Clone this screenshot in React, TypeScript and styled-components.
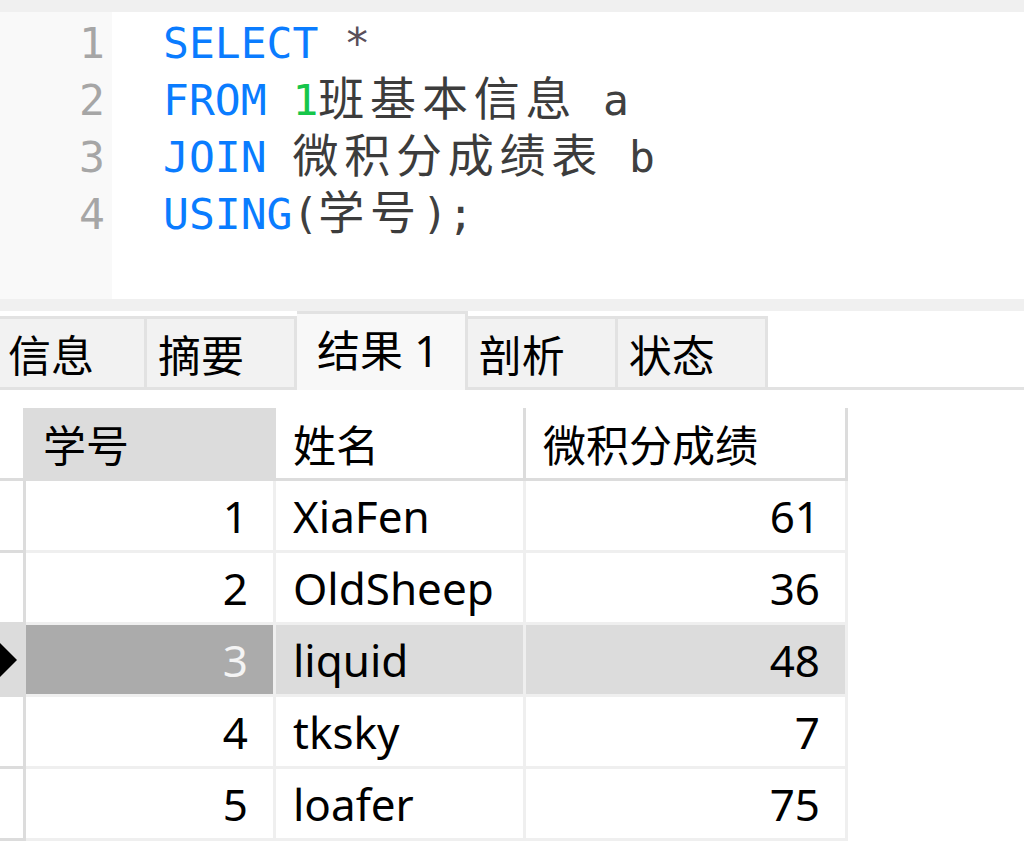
import React from "react";
import styled, { createGlobalStyle } from "styled-components";

const GlobalStyle = createGlobalStyle`
  html, body { margin: 0; padding: 0; background: #ffffff; }
  body { width: 1024px; height: 863px; overflow: hidden; }
`;

const MONO = `"DejaVu Sans Mono", "Liberation Mono", "Noto Sans CJK SC", monospace`;
const UI = `"Noto Sans", "Noto Sans CJK SC", sans-serif`;

const Page = styled.div`
  display: flex;
  flex-direction: column;
  width: 1024px;
  height: 863px;
  background: #ffffff;
`;

const Band = styled.div<{ $h: number }>`
  height: ${(p) => p.$h}px;
  background: #f0f0f0;
  flex: none;
`;

const Editor = styled.div`
  display: flex;
  height: 287px;
  flex: none;
  background: #ffffff;
`;

const Gutter = styled.div`
  width: 112px;
  box-sizing: border-box;
  background: #f9f9f9;
  padding: 3px 7px 0 0;
  text-align: right;
  font-family: ${MONO};
  font-size: 43px;
  line-height: 57px;
  color: #a6a6a6;
`;

const Code = styled.div`
  flex: 1;
  padding: 3px 0 0 51px;
  font-family: ${MONO};
  font-size: 43px;
  line-height: 57px;
  color: #404040;
  white-space: pre;
`;

const Line = styled.div`
  height: 57px;
`;

const Kw = styled.span`
  color: #0a7cff;
`;

const Num = styled.span`
  color: #16c64a;
`;

const Op = styled.span`
  color: #5a4f5a;
`;

const Cjk = styled.span`
  font-family: "Noto Sans CJK SC", sans-serif;
  font-size: 46px;
  letter-spacing: 5.77px;
  line-height: 36px;
  color: #3c3c3c;
`;

const TabBar = styled.div`
  display: flex;
  align-items: flex-end;
  height: 79px;
  flex: none;
  margin-left: -3px;
  font-family: ${UI};
  font-size: 43px;
  color: #000000;
`;

const Tab = styled.div<{ $active?: boolean }>`
  box-sizing: border-box;
  min-width: 150px;
  height: ${(p) => (p.$active ? 79 : 74)}px;
  padding: ${(p) => (p.$active ? "12px 26px 0 20px" : "12px 26px 0 11px")};
  background: ${(p) => (p.$active ? "#f8f8f8" : "#f2f2f2")};
  border-top: 3px solid #e2e2e2;
  border-right: 3px solid #e2e2e2;
  border-bottom: ${(p) => (p.$active ? "none" : "3px solid #e2e2e2")};
  line-height: 50px;
  white-space: pre;
`;

const TabFill = styled.div`
  flex: 1;
  height: 0;
  border-bottom: 3px solid #e2e2e2;
`;

const GridWrap = styled.div`
  margin-top: 18px;
  display: grid;
  grid-template-columns: 26px 250px 250px 322px;
  grid-auto-rows: 72px;
  grid-template-rows: 73px;
  font-family: ${UI};
  font-size: 44px;
  color: #000000;
`;

const Corner = styled.div`
  box-sizing: border-box;
  border-bottom: 3px solid #dcdcdc;
  background: #ffffff;
`;

const HeadCell = styled.div<{ $current?: boolean }>`
  box-sizing: border-box;
  display: flex;
  align-items: center;
  padding-left: 17px;
  font-size: 43px;
  background: ${(p) => (p.$current ? "#dcdcdc" : "#ffffff")};
  border-right: 3px solid #dcdcdc;
  border-bottom: 3px solid #dcdcdc;
  box-shadow: ${(p) => (p.$current ? "-3px 0 0 #dcdcdc" : "none")};
  white-space: nowrap;
`;

const Indicator = styled.div<{ $current?: boolean }>`
  box-sizing: border-box;
  display: flex;
  align-items: center;
  background: ${(p) => (p.$current ? "#dcdcdc" : "#ffffff")};
  border-right: 3px solid #dcdcdc;
  border-bottom: 3px solid #dcdcdc;
`;

const Cell = styled.div<{ $num?: boolean; $bg: string; $fg: string }>`
  box-sizing: border-box;
  display: flex;
  align-items: center;
  justify-content: ${(p) => (p.$num ? "flex-end" : "flex-start")};
  padding: ${(p) => (p.$num ? "0 25px 0 0" : "0 0 0 17px")};
  background: ${(p) => p.$bg};
  color: ${(p) => p.$fg};
  border-right: 3px solid #efefef;
  border-bottom: 3px solid #efefef;
  white-space: nowrap;
`;

const rows = [
  { id: 1, name: "XiaFen", score: 61 },
  { id: 2, name: "OldSheep", score: 36 },
  { id: 3, name: "liquid", score: 48 },
  { id: 4, name: "tksky", score: 7 },
  { id: 5, name: "loafer", score: 75 },
];

const CURRENT = 3;

export default function App() {
  return (
    <Page>
      <GlobalStyle />
      <Band $h={12} />
      <Editor>
        <Gutter>
          {[1, 2, 3, 4].map((n) => (
            <Line key={n}>{n}</Line>
          ))}
        </Gutter>
        <Code>
          <Line>
            <Kw>SELECT</Kw> <Op>*</Op>
          </Line>
          <Line>
            <Kw>FROM</Kw> <Num>1</Num>
            <Cjk>班基本信息</Cjk> a
          </Line>
          <Line>
            <Kw>JOIN</Kw> <Cjk>微积分成绩表</Cjk> b
          </Line>
          <Line>
            <Kw>USING</Kw>(<Cjk>学号</Cjk>);
          </Line>
        </Code>
      </Editor>
      <Band $h={12} />
      <TabBar>
        <Tab>信息</Tab>
        <Tab>摘要</Tab>
        <Tab $active>结果 1</Tab>
        <Tab>剖析</Tab>
        <Tab>状态</Tab>
        <TabFill />
      </TabBar>
      <GridWrap>
        <Corner />
        <HeadCell $current>学号</HeadCell>
        <HeadCell>姓名</HeadCell>
        <HeadCell>微积分成绩</HeadCell>
        {rows.map((r) => {
          const cur = r.id === CURRENT;
          return (
            <React.Fragment key={r.id}>
              <Indicator $current={cur}>
                {cur && (
                  <svg width="17" height="34" viewBox="0 0 17 34">
                    <polygon points="0,0 17,17 0,34" fill="#000000" />
                  </svg>
                )}
              </Indicator>
              <Cell $num $bg={cur ? "#ababab" : "#ffffff"} $fg={cur ? "#f4f4f4" : "#000000"}>
                {r.id}
              </Cell>
              <Cell $bg={cur ? "#dcdcdc" : "#ffffff"} $fg="#000000">
                {r.name}
              </Cell>
              <Cell $num $bg={cur ? "#dcdcdc" : "#ffffff"} $fg="#000000">
                {r.score}
              </Cell>
            </React.Fragment>
          );
        })}
      </GridWrap>
    </Page>
  );
}
